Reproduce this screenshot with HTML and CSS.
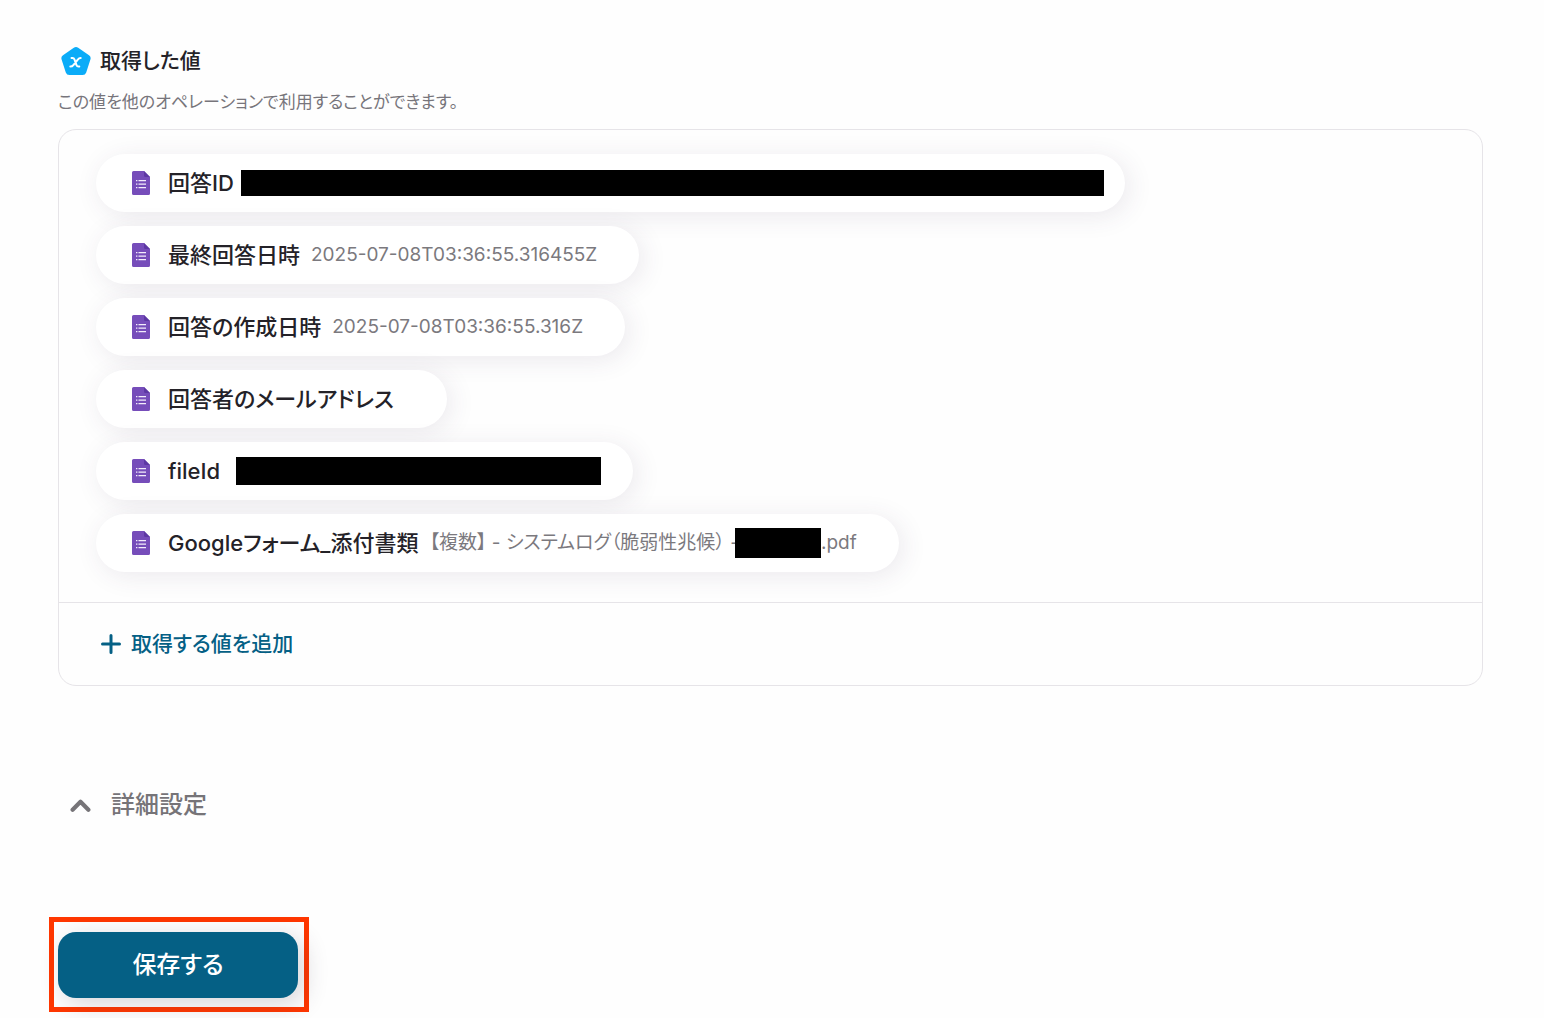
FILE: index.html
```html
<!DOCTYPE html>
<html lang="ja">
<head>
<meta charset="utf-8">
<meta name="viewport" content="width=device-width, initial-scale=1">
<title>取得した値</title>
<link rel="stylesheet" href="styles.css">
</head>
<body>
<svg width="0" height="0" class="sprite" aria-hidden="true">
  <symbol id="form-icon" viewBox="0 0 18 24">
    <path fill="#764dba" d="M1.600 0H12l6 6v16.400A1.600 1.600 0 0 1 16.400 24H1.600A1.600 1.600 0 0 1 0 22.400V1.600A1.600 1.600 0 0 1 1.600 0z"/>
    <path fill="#5d38a3" d="M12 0l6 6h-4.500A1.500 1.500 0 0 1 12 4.500z"/>
    <path fill="#f3edfb" d="M6.500 9H14v1.300H6.500zM6.500 12.500H14v1.300H6.500zM6.500 16H14v1.300H6.500zM4 9h1.400v1.300H4zM4 12.500h1.400v1.300H4zM4 16h1.400v1.300H4z"/>
  </symbol>
</svg>
<main class="page">
  <section class="values">
    <h2 class="values-title">
      <svg class="badge" viewBox="0 0 30 29" aria-hidden="true">
        <path fill="#0bacf8" d="M12.800.8a3.800 3.800 0 0 1 4.400 0L28 8.200a3.800 3.800 0 0 1 1.400 4.300L25.200 25.400A3.800 3.800 0 0 1 21.600 28H8.400a3.800 3.800 0 0 1-3.600-2.600L.6 12.500A3.800 3.800 0 0 1 2 8.200z"/>
        <path fill="none" stroke="#fff" stroke-width="2" stroke-linecap="round" d="M10.500 10.900h1c1.100 0 1.600.5 2 1.600l2 5.600c.4 1.100.9 1.500 2 1.500h.8M19.700 11c-1.500 0-2.100.5-3.100 1.800l-4 5c-1 1.300-1.700 1.800-3.300 1.800"/>
      </svg>
      取得した値
    </h2>
    <p class="values-note">この値を他のオペレーションで利用することができます。</p>
    <div class="card">
      <ul class="chips">
        <li class="chip chip-tight"><svg class="chip-icon"><use href="#form-icon"/></svg><span class="name">回答ID</span><span class="mask mask-id"></span></li>
        <li class="chip"><svg class="chip-icon"><use href="#form-icon"/></svg><span class="name">最終回答日時</span><span class="value">2025-07-08T03:36:55.316455Z</span></li>
        <li class="chip"><svg class="chip-icon"><use href="#form-icon"/></svg><span class="name">回答の作成日時</span><span class="value">2025-07-08T03:36:55.316Z</span></li>
        <li class="chip"><svg class="chip-icon"><use href="#form-icon"/></svg><span class="name">回答者のメールアドレス</span><span class="value"></span></li>
        <li class="chip chip-file"><svg class="chip-icon"><use href="#form-icon"/></svg><span class="name">fileId</span><span class="mask mask-file"></span></li>
        <li class="chip"><svg class="chip-icon"><use href="#form-icon"/></svg><span class="name">Googleフォーム_添付書類</span><span class="value">【複数】 - システムログ（脆弱性兆候） -<span class="mask mask-doc"></span>.pdf</span></li>
      </ul>
      <div class="card-footer">
        <button type="button" class="add">
          <svg class="add-icon" viewBox="0 0 20 20" aria-hidden="true"><path d="M10 1.500v17M1.500 10h17"/></svg>
          取得する値を追加
        </button>
      </div>
    </div>
  </section>
  <button type="button" class="advanced" aria-expanded="true">
    <svg class="chevron" viewBox="0 0 20 14" aria-hidden="true"><path d="M2.500 11L10 3.500l7.500 7.500"/></svg>
    詳細設定
  </button>
  <div class="save-frame">
    <button type="button" class="save">保存する</button>
  </div>
</main>
</body>
</html>
```
FILE: styles.css
```css
* { box-sizing: border-box; }

body {
  margin: 0;
  background: #fefefe;
  color: #242228;
  font-family: Inter, "Noto Sans CJK JP", sans-serif;
  font-feature-settings: "palt";
}

button {
  font: inherit;
  font-feature-settings: inherit;
  border: 0;
  background: none;
  cursor: pointer;
}

.sprite { position: absolute; }

.page {
  display: flex;
  flex-direction: column;
  align-items: flex-start;
  padding: 44px 61px 6px 58px;
}

.values { width: 100%; }

.values-title {
  display: flex;
  align-items: center;
  gap: 9px;
  margin: 0;
  padding-left: 3px;
  font-size: 21px;
  font-weight: 500;
  line-height: 34px;
}

.badge { width: 30px; height: 29px; }

.values-note {
  margin: 12px 0 15px;
  color: #77757b;
  font-size: 17px;
  line-height: 24px;
}

.card {
  border: 1px solid #e6e4e8;
  border-radius: 18px;
}

.chips {
  display: flex;
  flex-direction: column;
  align-items: flex-start;
  gap: 14px;
  margin: 0;
  padding: 24px 37px 30px;
  list-style: none;
}

.chip {
  display: flex;
  align-items: center;
  height: 58px;
  padding: 0 42px 0 36px;
  border-radius: 29px;
  background: #fff;
  box-shadow: 4px 4px 26px rgba(70, 45, 85, 0.1);
  line-height: 34px;
  white-space: nowrap;
}

.chip-tight { padding-right: 21px; }
.chip-file { padding-right: 32px; }

.chip-icon {
  width: 18px;
  height: 24px;
  margin-right: 18px;
}

.name {
  height: 34px;
  font-size: 22px;
  font-weight: 500;
}

.value {
  display: flex;
  align-items: center;
  height: 34px;
  margin-left: 11px;
  color: #7b797e;
  font-size: 19px;
  white-space: pre;
}

.mask { background: #000; }
.mask-id { width: 863px; height: 26px; margin-left: 7px; }
.mask-file { width: 365px; height: 28px; margin-left: 16px; }
.mask-doc { width: 86px; height: 30px; margin-left: -4px; }

.card-footer {
  padding: 24px 40px;
  border-top: 1px solid #e6e4e8;
}

.add {
  display: flex;
  align-items: center;
  gap: 10px;
  padding: 0 2px;
  color: #056085;
  font-size: 21px;
  font-weight: 500;
  line-height: 34px;
}

.add-icon { width: 20px; height: 20px; }

.add-icon path,
.chevron path {
  fill: none;
  stroke: currentColor;
  stroke-width: 3;
  stroke-linecap: round;
}

.advanced {
  display: flex;
  align-items: center;
  gap: 20px;
  margin-top: 100px;
  padding: 0 12px;
  color: #767478;
  font-size: 24px;
  font-weight: 500;
  line-height: 38px;
}

.chevron { width: 21px; height: 15px; }
.chevron path { stroke-width: 4; stroke-linejoin: round; }

.save-frame {
  margin: 93px 0 0 -9px;
  padding: 10px 6px 9px 4px;
  border: 5px solid #ff3700;
}

.save {
  display: block;
  width: 240px;
  padding: 14px 0;
  border-radius: 18px;
  background: #056085;
  box-shadow: 6px 6px 24px rgba(60, 50, 70, 0.2);
  color: #fff;
  font-size: 24px;
  font-weight: 500;
  line-height: 38px;
}
```
